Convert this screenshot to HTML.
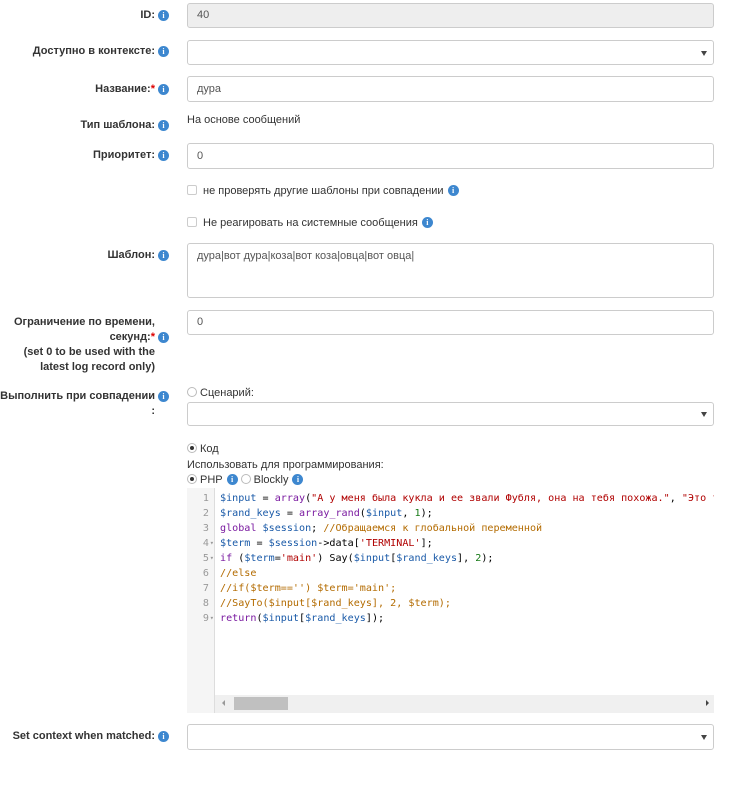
<!DOCTYPE html>
<html><head><meta charset="utf-8"><style>
body{margin:0;width:744px;height:786px;background:#fff;font-family:"Liberation Sans",Arial,sans-serif;font-size:11px;color:#333;position:relative;overflow:hidden}
.a{position:absolute}
.lbl{position:absolute;right:589px;font-weight:bold;text-align:right;white-space:nowrap;line-height:15px}
.i{display:inline-block;width:11px;height:11px;border-radius:50%;background:#3d87cf;color:#fff;font-size:8px;line-height:11px;text-align:center;font-weight:bold;vertical-align:1px;margin-left:4px;font-family:"Liberation Serif",serif}
.lbl .i{position:absolute;right:-14px;top:2px;margin:0}
.inp{position:absolute;left:187px;width:527px;border:1px solid #ccc;border-radius:3px;background:#fff;box-sizing:border-box;padding-left:9px;font-size:11px;color:#555}
.sel:after{content:"";position:absolute;right:6px;top:50%;margin-top:-2px;border-left:3px solid transparent;border-right:3px solid transparent;border-top:5px solid #444}
.cb{display:inline-block;width:8px;height:8px;border:1px solid #ccc;border-radius:2px;vertical-align:-1px;margin-right:6px}
.rd{display:inline-block;width:8px;height:8px;border:1px solid #bbb;border-radius:50%;vertical-align:-1px;margin-right:3px;box-sizing:content-box;position:relative}
.rd.on:after{content:"";position:absolute;left:2px;top:2px;width:4px;height:4px;border-radius:50%;background:#333}
.req{color:#d00}
.code{font-family:"DejaVu Sans Mono","Liberation Mono",monospace;font-size:10.1px;line-height:15px;white-space:pre}
.v{color:#1a5aa8}.k{color:#7a1aa0}.s{color:#b00000}.c{color:#b36b00}.n{color:#177a17}.f{color:#7a1aa0}
</style></head><body>

<div class="lbl" style="top:8px">ID:<span class="i">i</span></div>
<div class="inp" style="top:3px;height:25px;line-height:23px;background:#eee">40</div>

<div class="lbl" style="top:44px">Доступно в контексте:<span class="i">i</span></div>
<div class="inp sel" style="top:40px;height:25px"></div>

<div class="lbl" style="top:82px">Название:<span class="req">*</span><span class="i">i</span></div>
<div class="inp" style="top:76px;height:26px;line-height:24px">дура</div>

<div class="lbl" style="top:118px">Тип шаблона:<span class="i">i</span></div>
<div class="a" style="left:187px;top:113px;line-height:15px;color:#333">На основе сообщений</div>

<div class="lbl" style="top:148px">Приоритет:<span class="i">i</span></div>
<div class="inp" style="top:143px;height:26px;line-height:24px">0</div>

<div class="a" style="left:187px;top:185px"><span class="cb"></span>не проверять другие шаблоны при совпадении<span class="i">i</span></div>
<div class="a" style="left:187px;top:217px"><span class="cb"></span>Не реагировать на системные сообщения<span class="i">i</span></div>

<div class="lbl" style="top:248px">Шаблон:<span class="i">i</span></div>
<div class="inp" style="top:243px;height:55px;padding-top:5px;line-height:14px">дура|вот дура|коза|вот коза|овца|вот овца|</div>

<div class="lbl" style="top:315px;line-height:15px">Ограничение по времени,<br>секунд:<span class="req">*</span><span class="i" style="top:17px">i</span><br>(set 0 to be used with the<br>latest log record only)</div>
<div class="inp" style="top:310px;height:25px;line-height:23px">0</div>

<div class="lbl" style="top:389px">Выполнить при совпадении<span class="i">i</span><br>:</div>
<div class="a" style="left:187px;top:387px;color:#333"><span class="rd"></span>Сценарий:</div>
<div class="inp sel" style="top:402px;height:24px"></div>

<div class="a" style="left:187px;top:443px"><span class="rd on"></span>Код</div>
<div class="a" style="left:187px;top:459px">Использовать для программирования:</div>
<div class="a" style="left:187px;top:474px"><span class="rd on"></span>PHP<span class="i" style="margin-right:3px">i</span><span class="rd"></span>Blockly<span class="i">i</span></div>

<div class="a" style="left:187px;top:488px;width:527px;height:225px;overflow:hidden">
<div class="a" style="left:0;top:0;width:27px;height:225px;background:#f5f5f5;border-right:1px solid #ddd"></div>
<div class="a code" style="left:0;top:3px;width:22px;text-align:right;color:#999">1
2
3
4
5
6
7
8
9</div>
<div class="a code" style="left:0;top:3px;width:27px;color:#999;font-size:7px;line-height:15px;text-align:right">


▾
▾



▾</div>
<div class="a code" style="left:33px;top:3px;color:#000"><span class="v">$input</span> = <span class="f">array</span>(<span class="s">"А у меня была кукла и ее звали Фубля, она на тебя похожа."</span>, <span class="s">"Это ты</span>
<span class="v">$rand_keys</span> = <span class="f">array_rand</span>(<span class="v">$input</span>, <span class="n">1</span>);
<span class="k">global</span> <span class="v">$session</span>; <span class="c">//Обращаемся к глобальной переменной</span>
<span class="v">$term</span> = <span class="v">$session</span>-&gt;data[<span class="s">'TERMINAL'</span>];
<span class="k">if</span> (<span class="v">$term</span>=<span class="s">'main'</span>) Say(<span class="v">$input</span>[<span class="v">$rand_keys</span>], <span class="n">2</span>);
<span class="c">//else</span>
<span class="c">//if($term=='') $term='main';</span>
<span class="c">//SayTo($input[$rand_keys], 2, $term);</span>
<span class="k">return</span>(<span class="v">$input</span>[<span class="v">$rand_keys</span>]);</div>
<div class="a" style="left:28px;top:207px;width:499px;height:18px;background:#f0f0f0"></div>
<div class="a" style="left:47px;top:209px;width:54px;height:13px;background:#c0c0c0"></div>
<div class="a" style="left:35px;top:212px;border-top:3px solid transparent;border-bottom:3px solid transparent;border-right:3px solid #999"></div>
<div class="a" style="left:519px;top:212px;border-top:3px solid transparent;border-bottom:3px solid transparent;border-left:3px solid #444"></div>
</div>

<div class="lbl" style="top:729px">Set context when matched:<span class="i">i</span></div>
<div class="inp sel" style="top:724px;height:26px"></div>

</body></html>
